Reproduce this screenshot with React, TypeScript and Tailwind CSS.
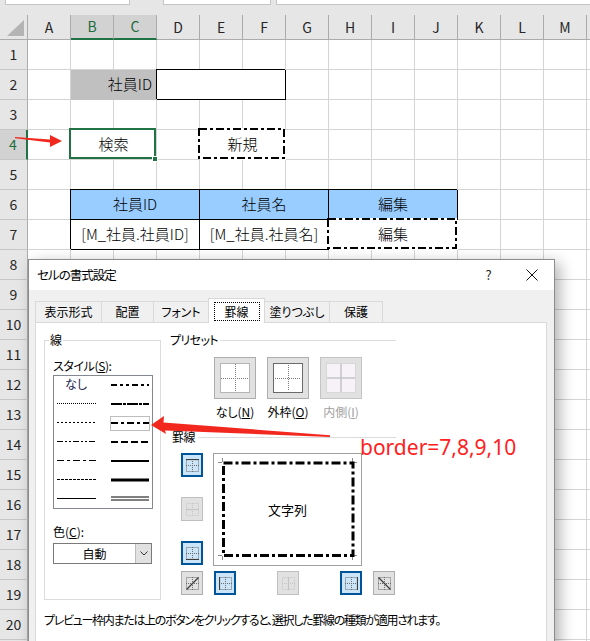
import type { ReactNode } from 'react'

const COLS = ['A', 'B', 'C', 'D', 'E', 'F', 'G', 'H', 'I', 'J', 'K', 'L', 'M']

type Kind = 'grey' | 'box' | 'blue' | 'dash' | 'sel'
type CellSpec = { span?: number; text?: string; kind?: Kind }

const fill = (n: number): CellSpec[] => Array.from({ length: n }, () => ({}))

const ROWS: Record<number, CellSpec[]> = {
    2: [{}, { span: 2, text: '社員ID', kind: 'grey' }, { span: 3, kind: 'box' }, ...fill(7)],
    4: [{}, { span: 2, text: '検索', kind: 'sel' }, {}, { span: 2, text: '新規', kind: 'dash' }, ...fill(7)],
    6: [
        {},
        { span: 3, text: '社員ID', kind: 'blue' },
        { span: 3, text: '社員名', kind: 'blue' },
        { span: 3, text: '編集', kind: 'blue' },
        ...fill(3),
    ],
    7: [
        {},
        { span: 3, text: '[M_社員.社員ID]', kind: 'box' },
        { span: 3, text: '[M_社員.社員名]', kind: 'box' },
        { span: 3, text: '編集', kind: 'dash' },
        ...fill(3),
    ],
}

function DashFrame() {
    return (
        <svg className="absolute inset-0 w-full h-full overflow-visible">
            <rect x="-1" y="-1" width="100%" height="100%" fill="none" stroke="#fff" strokeWidth="2" />
            <rect x="-1" y="-1" width="100%" height="100%" fill="none" stroke="#000" strokeWidth="2" strokeDasharray="8 3 3 3" />
        </svg>
    )
}

function Cell({ spec }: { spec: CellSpec }) {
    const span = spec.span === 3 ? 'col-span-3' : spec.span === 2 ? 'col-span-2' : ''
    let cls = 'border-r border-b border-[#d4d4d4]'
    if (spec.kind === 'grey') cls = 'border-r border-b border-[#c0c0c0] bg-[#c0c0c0] justify-end pr-[4px]'
    if (spec.kind === 'box') cls = 'border-r border-b border-black shadow-[-1px_-1px_0_0_#000] justify-center'
    if (spec.kind === 'blue') cls = 'border-r border-b border-black bg-[#99ccff] shadow-[-1px_-1px_0_0_#000] justify-center'
    if (spec.kind === 'dash') cls = 'relative border-r border-b border-transparent justify-center'
    if (spec.kind === 'sel') cls = 'relative border-r border-b border-[#d4d4d4] justify-center'
    return (
        <div className={`flex items-center whitespace-nowrap text-[15px] font-light text-black ${span} ${cls}`}>
            {spec.text}
            {spec.kind === 'dash' && <DashFrame />}
            {spec.kind === 'sel' && (
                <>
                    <div className="absolute -left-[2px] -top-[2px] right-0 bottom-0 border-2 border-[#217346]" />
                    <div className="absolute -right-[2px] -bottom-[3px] w-[6px] h-[6px] bg-[#217346] border border-white" />
                </>
            )}
        </div>
    )
}

function Row({ r }: { r: number }) {
    const cells = ROWS[r] ?? fill(13)
    const sel = r === 4
    return (
        <>
            <div
                className={`flex items-center justify-center text-[14px] border-b border-b-[#c6c6c6] ${
                    sel
                        ? 'bg-[#d2d2d2] text-[#1e6b3c] border-r-2 border-r-[#217346]'
                        : 'bg-[#e6e6e6] text-[#262626] border-r border-r-[#ababab]'
                }`}
            >
                {r <= 20 ? r : ''}
            </div>
            {cells.map((c, i) => (
                <Cell key={i} spec={c} />
            ))}
            <div className="border-b border-[#d4d4d4]" />
        </>
    )
}

function Sheet() {
    const rows = Array.from({ length: 21 }, (_, i) => i + 1)
    return (
        <div className="grid grid-cols-[28px_repeat(13,43px)_1fr] grid-rows-[25px_repeat(21,30px)]">
            <div className="bg-[#e6e6e6] border-r border-b border-[#ababab]">
                <svg className="block" width="27" height="24">
                    <polygon points="7,21 24,21 24,5" fill="#b4b4b4" />
                </svg>
            </div>
            {COLS.map((c) => {
                const sel = c === 'B' || c === 'C'
                return (
                    <div
                        key={c}
                        className={`flex items-center justify-center text-[14px] border-r border-r-[#ababab] ${
                            sel
                                ? 'bg-[#d2d2d2] text-[#1e6b3c] border-b-2 border-b-[#217346]'
                                : 'bg-[#e6e6e6] text-[#262626] border-b border-b-[#ababab]'
                        }`}
                    >
                        {c}
                    </div>
                )
            })}
            <div className="bg-[#e6e6e6] border-b border-[#ababab]" />
            {rows.map((r) => (
                <Row key={r} r={r} />
            ))}
        </div>
    )
}

type Line = 'top' | 'hmid' | 'bottom' | 'diagUp' | 'left' | 'vmid' | 'right' | 'diagDown'

const LINE_PATH: Record<Line, string> = {
    top: 'M0 0.5 H13',
    hmid: 'M0 6.5 H13',
    bottom: 'M0 12.5 H13',
    diagUp: 'M0.5 12.5 L12.5 0.5',
    left: 'M0.5 0 V13',
    vmid: 'M6.5 0 V13',
    right: 'M12.5 0 V13',
    diagDown: 'M0.5 0.5 L12.5 12.5',
}

function SmallBtn({ kind, state }: { kind: Line; state: 'on' | 'off' | 'dis' }) {
    const cls =
        state === 'on'
            ? 'bg-[#cce4f7] border-2 border-[#005499]'
            : state === 'dis'
              ? 'bg-[#e1e1e1] border border-[#bfbfbf]'
              : 'bg-[#e1e1e1] border border-[#adadad]'
    const dot = state === 'dis' ? '#c4c4c4' : '#6b6b6b'
    const solid = state === 'dis' ? '#c4c4c4' : '#3c3c3c'
    return (
        <div className={`w-[22px] h-[24px] flex items-center justify-center ${cls}`}>
            <svg width="13" height="13" viewBox="0 0 13 13">
                <rect x="0.5" y="0.5" width="12" height="12" fill="none" stroke={dot} strokeDasharray="1 1" />
                <path d="M6.5 0 V13 M0 6.5 H13" stroke={dot} strokeDasharray="1 1" />
                <path d={LINE_PATH[kind]} stroke={solid} strokeWidth="1.2" />
            </svg>
        </div>
    )
}

function PresetBtn({ kind }: { kind: 'none' | 'outline' | 'inside' }) {
    const dis = kind === 'inside'
    return (
        <div
            className={`w-[42px] h-[42px] flex items-center justify-center bg-[#e1e1e1] border ${
                dis ? 'border-[#c4c4c4]' : 'border-[#adadad]'
            }`}
        >
            <svg width="30" height="30" viewBox="0 0 30 30">
                {kind === 'none' && (
                    <>
                        <rect x="0.5" y="0.5" width="29" height="29" fill="#fff" stroke="#7a7a7a" strokeDasharray="1 1" />
                        <path d="M15.5 1 V29 M1 15.5 H29" stroke="#7a7a7a" strokeDasharray="1 1" />
                    </>
                )}
                {kind === 'outline' && (
                    <>
                        <rect x="0.5" y="0.5" width="29" height="29" fill="#fff" stroke="#6a6a6a" strokeWidth="1" />
                        <path d="M15.5 2 V28 M2 15.5 H28" stroke="#7a7a7a" strokeDasharray="1 1" />
                    </>
                )}
                {kind === 'inside' && (
                    <>
                        <rect x="0.5" y="0.5" width="29" height="29" fill="#f6f2f8" stroke="#c4c4c4" strokeDasharray="1 1" />
                        <path d="M15 1 V29 M1 15 H29" stroke="#c4c4c4" strokeWidth="1.5" />
                    </>
                )}
            </svg>
        </div>
    )
}

function Heading({ text, pad }: { text: string; pad?: boolean }) {
    return (
        <div className={`flex items-center h-[14px] ${pad ? 'pl-[2px]' : ''}`}>
            <span className="leading-[14px] tracking-[-0.6px]">{text}</span>
            <div className={`flex-1 h-px bg-[#dcdcdc] ${pad ? 'ml-[3px]' : 'ml-[2px]'}`} />
        </div>
    )
}

function StyleList() {
    const y = (i: number) => 8.5 + 19 * i
    const yy = (i: number) => 9 + 19 * i
    const left: (string | null)[] = [null, '1 1', '2 2', '6 2 2 2 2 2', '7 3 3 3', '3 1', '']
    const right: string[] = ['6 3 3 3 3 3', '11 1 3 1', '7 3 3 3', '7 3']
    return (
        <div className="mt-[2px] w-[100px] h-[134px] border border-[#828790] bg-white">
            <svg className="block" width="98" height="132">
                <text x="22" y="13" textAnchor="middle" fontSize="12" fill="#1c2452" fontFamily="Noto Sans CJK JP">
                    なし
                </text>
                {left.map((d, i) =>
                    d === null ? null : (
                        <line key={i} x1="3" x2="42" y1={y(i)} y2={y(i)} stroke="#000" strokeWidth="1" strokeDasharray={d || undefined} />
                    ),
                )}
                {right.map((d, i) => (
                    <line key={i} x1="57" x2="95" y1={yy(i)} y2={yy(i)} stroke="#000" strokeWidth="2" strokeDasharray={d} />
                ))}
                <line x1="57" x2="95" y1={yy(4)} y2={yy(4)} stroke="#000" strokeWidth="2" />
                <line x1="57" x2="95" y1={y(5) + 0.5} y2={y(5) + 0.5} stroke="#000" strokeWidth="3" />
                <line x1="57" x2="95" y1={y(6) - 1.5} y2={y(6) - 1.5} stroke="#000" strokeWidth="1" />
                <line x1="57" x2="95" y1={y(6) + 1.5} y2={y(6) + 1.5} stroke="#000" strokeWidth="1" />
                <rect x="56.5" y="40.5" width="39" height="14" fill="none" stroke="#7a7a7a" strokeDasharray="1 1" />
            </svg>
        </div>
    )
}

function Preview() {
    return (
        <div className="ml-[10px] w-[149px] h-[113px] border border-[#a0a0a0] bg-white relative flex items-center justify-center">
            <svg className="absolute inset-0" width="147" height="111">
                <path
                    d="M4 8.5 H8 M8.5 4 V8 M139 8.5 H143 M138.5 4 V8 M4 101.5 H8 M8.5 102 V106 M139 101.5 H143 M138.5 102 V106"
                    stroke="#8a8a8a"
                />
                <rect x="9.5" y="9" width="129.5" height="92.5" fill="none" stroke="#000" strokeWidth="3" strokeDasharray="9 3 3 3" />
            </svg>
            <span className="relative text-[13px]">文字列</span>
        </div>
    )
}

function Panel() {
    return (
        <div className="w-[512px] h-[330px] bg-white border border-[#d9d9d9]">
            <div className="flex">
                <div className="ml-[8px] mt-[17px] w-[117px] h-[260px] border border-[#dcdcdc] pl-[8px]">
                    <div className="-mt-[8px] -ml-[4px] w-fit px-[1px] bg-white h-[14px] leading-[14px]">線</div>
                    <div className="mt-[11px] h-[15px] leading-[15px] tracking-[-0.4px]">
                        スタイル(<span className="underline">S</span>):
                    </div>
                    <StyleList />
                    <div className="mt-[15px] h-[15px] leading-[15px]">
                        色(<span className="underline">C</span>):
                    </div>
                    <div className="mt-[4px] w-[99px] h-[21px] border border-[#7a7a7a] bg-white flex">
                        <div className="flex-1 flex items-center justify-center">自動</div>
                        <div className="w-[16px] bg-[#e1e1e1] border-l border-[#bcbcbc] flex items-center justify-center">
                            <svg width="8" height="5" viewBox="0 0 8 5">
                                <path d="M0.5 0.5 L4 4 L7.5 0.5" fill="none" stroke="#333" />
                            </svg>
                        </div>
                    </div>
                </div>
                <div className="ml-[9px] w-[226px]">
                    <div className="mt-[10px]">
                        <Heading text="プリセット" />
                    </div>
                    <div className="mt-[10px] ml-[44px] flex gap-[11px]">
                        <PresetBtn kind="none" />
                        <PresetBtn kind="outline" />
                        <PresetBtn kind="inside" />
                    </div>
                    <div className="mt-[5px] ml-[44px] flex gap-[11px] h-[16px] leading-[16px]">
                        <div className="w-[42px] flex justify-center whitespace-nowrap">
                            なし(<span className="underline">N</span>)
                        </div>
                        <div className="w-[42px] flex justify-center whitespace-nowrap">
                            外枠(<span className="underline">O</span>)
                        </div>
                        <div className="w-[42px] flex justify-center whitespace-nowrap text-[#a0a0a0]">
                            内側(<span className="underline">I</span>)
                        </div>
                    </div>
                    <div className="mt-[10px]">
                        <Heading text="罫線" pad />
                    </div>
                    <div className="mt-[9px] flex">
                        <div className="ml-[11px] flex flex-col gap-[20px]">
                            <SmallBtn kind="top" state="on" />
                            <SmallBtn kind="hmid" state="dis" />
                            <SmallBtn kind="bottom" state="on" />
                        </div>
                        <Preview />
                    </div>
                    <div className="mt-[5px] flex">
                        <div className="ml-[11px]">
                            <SmallBtn kind="diagUp" state="off" />
                        </div>
                        <div className="ml-[11px]">
                            <SmallBtn kind="left" state="on" />
                        </div>
                        <div className="ml-[41px]">
                            <SmallBtn kind="vmid" state="dis" />
                        </div>
                        <div className="ml-[41px]">
                            <SmallBtn kind="right" state="on" />
                        </div>
                        <div className="ml-[11px]">
                            <SmallBtn kind="diagDown" state="off" />
                        </div>
                    </div>
                </div>
            </div>
            <div className="ml-[8px] mt-[13px] h-[14px] leading-[14px] whitespace-nowrap tracking-[-1.3px]">
                プレビュー枠内または上のボタンをクリックすると、選択した罫線の種類が適用されます。
            </div>
        </div>
    )
}

function Tab({ w, children, sel }: { w: string; children: ReactNode; sel?: boolean }) {
    if (sel)
        return (
            <div className={`relative z-10 ${w} h-[25px] -mb-px bg-white border-t border-x border-[#d9d9d9] flex items-center justify-center`}>
                <span className="mt-[1px] w-[46px] h-[19px] border border-dotted border-black flex items-center justify-center">{children}</span>
            </div>
        )
    return <div className={`${w} h-[21px] border-t border-[#d9d9d9] flex items-center justify-center`}>{children}</div>
}

function Dialog() {
    return (
        <div className="absolute left-[28px] top-[259px] w-[527px] h-[400px] border border-[#8c8c8c] bg-[#f0f0f0] shadow-[5px_4px_14px_rgba(0,0,0,0.3)] text-[12px] leading-[14px] text-black [font-feature-settings:'palt']">
            <div className="h-[30px] bg-white flex items-center pl-[8px]">
                <span className="text-[12.5px] tracking-[-1px]">セルの書式設定</span>
                <span className="ml-auto w-[11px] text-center text-[13px] text-[#222]">?</span>
                <svg className="ml-[32px] mr-[16px]" width="12" height="12" viewBox="0 0 12 12">
                    <path d="M0.5 0.5 L11.5 11.5 M11.5 0.5 L0.5 11.5" stroke="#111" strokeWidth="1" />
                </svg>
            </div>
            <div className="pl-[6px] pt-[8px]">
                <div className="flex items-end h-[24px]">
                    <div className="border-l border-[#d9d9d9] flex items-end">
                        <Tab w="w-[65px]">表示形式</Tab>
                    </div>
                    <div className="border-l border-[#d9d9d9] flex items-end">
                        <Tab w="w-[51px]">配置</Tab>
                    </div>
                    <div className="border-l border-[#d9d9d9] flex items-end">
                        <Tab w="w-[54px]">フォント</Tab>
                    </div>
                    <Tab w="w-[57px]" sel>
                        罫線
                    </Tab>
                    <Tab w="w-[64px]">塗りつぶし</Tab>
                    <div className="border-l border-r border-[#d9d9d9] flex items-end">
                        <Tab w="w-[52px]">保護</Tab>
                    </div>
                </div>
                <Panel />
            </div>
        </div>
    )
}

export default function App() {
    return (
        <div className="relative w-[590px] h-[641px] overflow-hidden bg-white [font-family:'Noto_Sans_CJK_JP',sans-serif]">
            <div className="h-[15px] bg-[#e6e6e6] flex">
                <div className="ml-[5px] w-[125px] h-[5px] bg-white border-x border-b border-[#c6c6c6]" />
                <div className="ml-[33px] w-[108px] h-[5px] bg-white border-x border-b border-[#c6c6c6]" />
                <div className="ml-[5px] flex-1 h-[5px] bg-white border-l border-b border-[#c6c6c6]" />
            </div>
            <Sheet />
            <svg className="absolute left-0 top-0 pointer-events-none" width="70" height="160">
                <polygon points="15,137 50,139.5 50,135 62,141 50,147 50,142.5 15,138.2" fill="#f2281e" />
            </svg>
            <Dialog />
            <svg className="absolute left-0 top-0 pointer-events-none" width="590" height="641">
                <polygon points="151,425 164,416 163.5,422.5 330,435.3 330,437 165,430.5 166,434" fill="#f2281e" />
            </svg>
            <div className="absolute left-[360px] top-[434px] text-[21px] leading-[26px] text-[#ff2121] [font-family:'Noto_Sans',sans-serif] whitespace-nowrap">
                border=7,8,9,10
            </div>
        </div>
    )
}
